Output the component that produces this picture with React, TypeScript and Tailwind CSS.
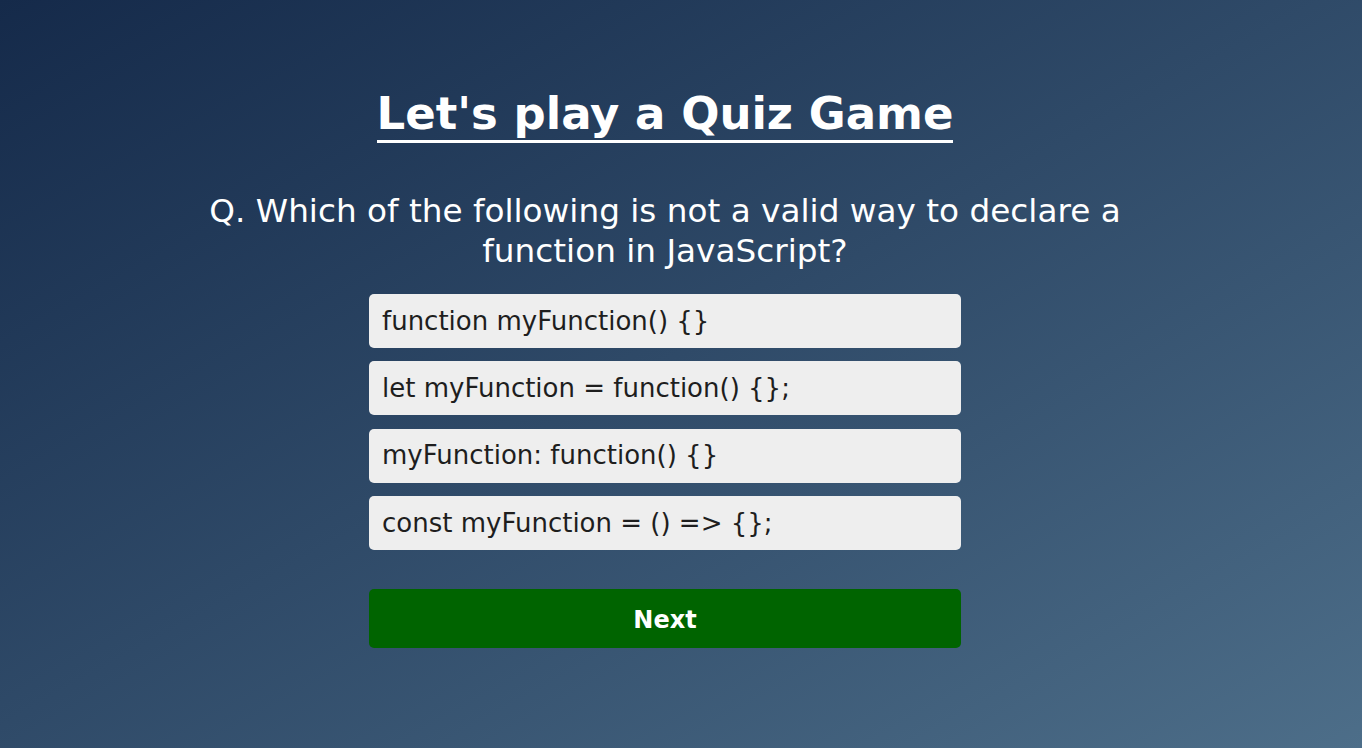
import { useState } from "react";

const options = [
  "function myFunction() {}",
  "let myFunction = function() {};",
  "myFunction: function() {}",
  "const myFunction = () => {};",
];

export default function App() {
  const [selected, setSelected] = useState<number | null>(null);

  return (
    <div
      className="min-h-screen w-full bg-gradient-to-br from-[#152a4a] to-[#4d6e89] text-white"
      style={{ fontFamily: '"DejaVu Sans", sans-serif' }}
    >
      <div className="w-[1330px] flex flex-col items-center pt-[88px]">
        {/* Title */}
        <h1 className="text-[45px] font-bold leading-[52px] border-b-[3px] border-white">
          Let's play a Quiz Game
        </h1>

        {/* Question */}
        <h2 className="mt-[48px] w-[960px] text-center text-[32.7px] leading-[40px]">
          Q. Which of the following is not a valid way to declare a function in JavaScript?
        </h2>

        {/* Answers */}
        <div className="mt-[23px] w-[592px] flex flex-col gap-[13.4px]">
          {options.map((opt, i) => (
            <button
              key={i}
              onClick={() => setSelected(i)}
              className={`h-[54px] w-full rounded-[5px] px-[13px] text-left text-[26px] text-[#1e1e1e] ${
                selected === i ? "bg-[#cfcfcf]" : "bg-[#eeeeee]"
              }`}
            >
              {opt}
            </button>
          ))}
        </div>

        <button className="mt-[39px] h-[59px] w-[592px] rounded-[5px] bg-[#006400] pt-[2px] text-[24px] font-bold text-white">
          Next
        </button>
      </div>
    </div>
  );
}
